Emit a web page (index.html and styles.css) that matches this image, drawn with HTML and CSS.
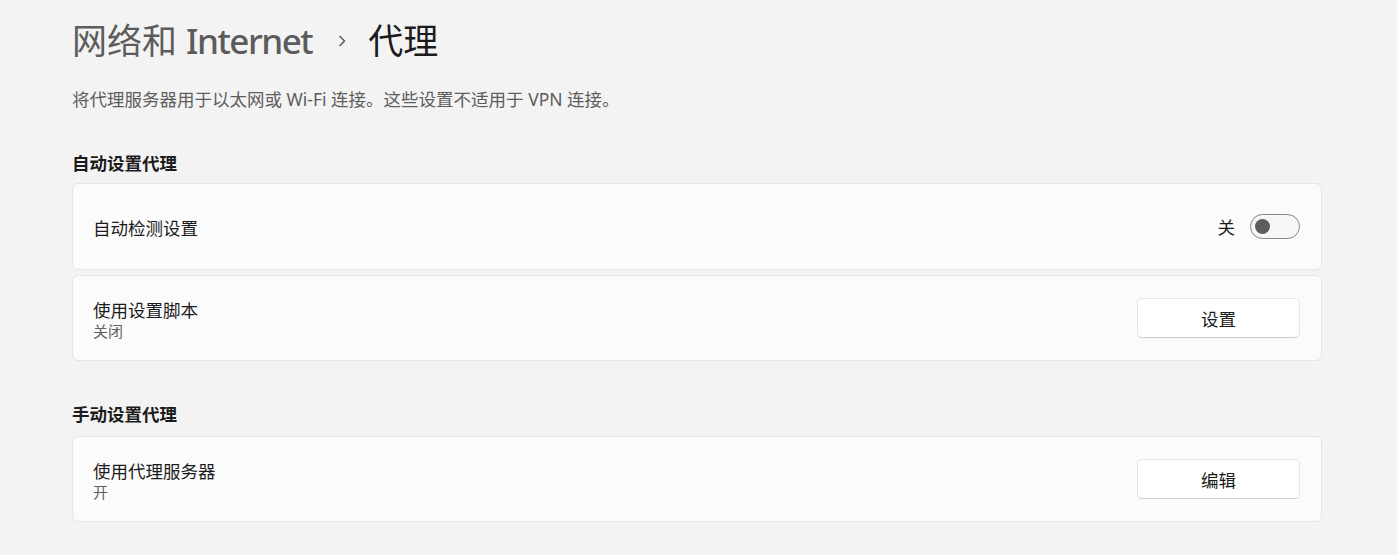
FILE: index.html
```html
<!DOCTYPE html>
<html lang="zh-CN">
<head>
<meta charset="utf-8">
<title>代理</title>
<link rel="stylesheet" href="styles.css">
</head>
<body>
<main class="page">
  <h1 class="crumbs">
    <span class="crumb-parent">网络和 <span class="latin">Internet</span></span>
    <svg class="chevron" width="10" height="14" viewBox="0 0 10 14"><path d="M3 2.5 L7.5 7 L3 11.5" fill="none" stroke="#5c5c5c" stroke-width="1.6" stroke-linecap="round" stroke-linejoin="round"/></svg>
    <span class="crumb-current">代理</span>
  </h1>
  <p class="desc">将代理服务器用于以太网或 Wi-Fi 连接。这些设置不适用于 VPN 连接。</p>

  <section class="group">
    <h2 class="group-title">自动设置代理</h2>
    <div class="card tall">
      <div class="card-text"><div class="card-title">自动检测设置</div></div>
      <div class="card-action">
        <span class="toggle-label">关</span>
        <span class="toggle"><span class="knob"></span></span>
      </div>
    </div>
    <div class="card">
      <div class="card-text two">
        <div class="card-title">使用设置脚本</div>
        <div class="card-sub">关闭</div>
      </div>
      <div class="card-action"><button class="btn">设置</button></div>
    </div>
  </section>

  <section class="group second">
    <h2 class="group-title">手动设置代理</h2>
    <div class="card">
      <div class="card-text two">
        <div class="card-title">使用代理服务器</div>
        <div class="card-sub">开</div>
      </div>
      <div class="card-action"><button class="btn">编辑</button></div>
    </div>
  </section>
</main>
</body>
</html>
```

FILE: styles.css
```css
html, body {
  margin: 0;
  padding: 0;
  background: #f3f3f3;
}
body {
  font-family: "Segoe UI", "Noto Sans", "Noto Sans CJK SC", sans-serif;
  color: #1b1b1b;
  font-size: 17.5px;
}
.page {
  width: 1250px;
  padding: 17px 0 0 72px;
}
.crumbs {
  margin: 0;
  height: 48px;
  display: flex;
  align-items: center;
  font-size: 35px;
  font-weight: 400;
  line-height: 48px;
}
.crumb-parent {
  color: #5c5c5c;
}
.latin {
  font-weight: 500;
  letter-spacing: -1.5px;
}
.chevron {
  margin: 0 21px 0 25px;
}
.crumb-current {
  color: #1b1b1b;
}
.desc {
  margin: 22px 0 0;
  line-height: 24px;
  font-size: 17.5px;
  color: #5d5d5d;
}
.group {
  margin-top: 40px;
}
.group.second {
  margin-top: 41px;
}
.group-title {
  margin: 0 0 8px;
  font-size: 17.5px;
  line-height: 24px;
  font-weight: 600;
  color: #1b1b1b;
}
.second .group-title {
  margin-bottom: 10px;
}
.card {
  box-sizing: border-box;
  height: 86px;
  background: #fbfbfb;
  border: 1px solid #e5e5e5;
  border-radius: 6px;
  display: flex;
  align-items: center;
  justify-content: space-between;
  padding: 0 21px 0 20px;
  margin-bottom: 5px;
}
.card.tall {
  height: 87px;
}
.card-text {
  padding-top: 2px;
}
.card-text.two {
  padding-top: 4px;
}
.card-title {
  line-height: 22px;
  font-size: 17.5px;
  color: #1b1b1b;
}
.card-sub {
  line-height: 20px;
  font-size: 15px;
  color: #5f5f5f;
}
.card-action {
  display: flex;
  align-items: center;
}
.toggle-label {
  font-size: 17.5px;
  line-height: 24px;
  margin-right: 15px;
  color: #1b1b1b;
}
.toggle {
  box-sizing: border-box;
  width: 50px;
  height: 25px;
  border: 1px solid #868686;
  border-radius: 13px;
  background: #f6f6f6;
  display: flex;
  align-items: center;
  padding-left: 4px;
}
.knob {
  width: 15px;
  height: 15px;
  border-radius: 50%;
  background: #5d5d5d;
}
.btn {
  box-sizing: border-box;
  width: 163px;
  height: 40px;
  background: #ffffff;
  border: 1px solid #e5e5e5;
  border-bottom-color: #cccccc;
  border-radius: 5px;
  font-family: "Segoe UI", "Noto Sans", "Noto Sans CJK SC", sans-serif;
  font-size: 17.5px;
  color: #1b1b1b;
  padding: 0;
}
```
